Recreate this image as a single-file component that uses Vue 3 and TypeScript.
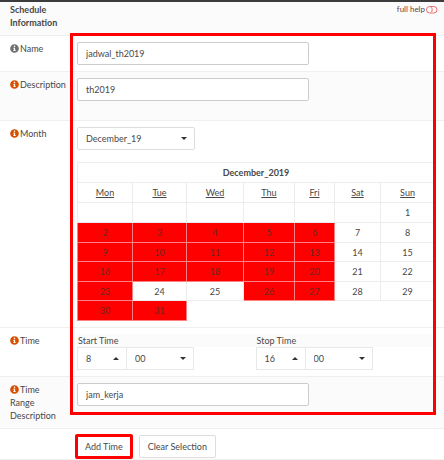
<script setup lang="ts">
import { ref } from 'vue'

interface Day {
  n: number | null
  busy: boolean
}

const name = ref('jadwal_th2019')
const description = ref('th2019')
const month = ref('December_19')
const rangeDescription = ref('jam_kerja')

const weekdays = ['Mon', 'Tue', 'Wed', 'Thu', 'Fri', 'Sat', 'Sun']
const freeDays = [1, 7, 8, 14, 15, 21, 22, 24, 25, 28, 29]

const weeks: Day[][] = Array.from({ length: 6 }, (_, w) =>
  weekdays
    .map((_, d) => w * 7 + d - 5)
    .filter((n) => n <= 31)
    .map((n) => ({ n: n > 0 ? n : null, busy: n > 0 && !freeDays.includes(n) })),
)

const times = [
  { id: 'start', label: 'Start Time', hour: '8', minute: '00' },
  { id: 'stop', label: 'Stop Time', hour: '16', minute: '00' },
]

const infoPath =
  'M256 8C119.043 8 8 119.083 8 256c0 136.997 111.043 248 248 248s248-111.003 248-248C504 119.083 392.957 8 256 8zm0 80c26 0 46 20 46 46s-20 46-46 46-46-20-46-46 20-46 46-46zm64 300c0 7-5 12-12 12h-104c-7 0-12-5-12-12v-32c0-7 5-12 12-12h16v-76h-16c-7 0-12-5-12-12v-32c0-7 5-12 12-12h76c7 0 12 5 12 12v120h16c7 0 12 5 12 12v32z'
</script>

<template>
  <main class="page">
    <header class="head">
      <strong class="title">Schedule Information</strong>
      <a class="help" href="#">
        full help
        <svg class="toggle" viewBox="0 0 12 8" aria-hidden="true">
          <rect x="0.5" y="0.5" width="10.5" height="6.5" rx="3.25" />
          <path d="M5 1.2C6.600 2 6.600 5.500 5 6.300" />
        </svg>
      </a>
    </header>

    <form class="form" @submit.prevent>
      <div class="row">
        <label class="label" for="name">
          <svg class="info muted" viewBox="0 0 512 512" aria-hidden="true"><path :d="infoPath" /></svg>Name
        </label>
        <div class="field"><input id="name" v-model="name" class="control text" type="text" /></div>
      </div>

      <div class="row shaded tall">
        <label class="label" for="description">
          <svg class="info" viewBox="0 0 512 512" aria-hidden="true"><path :d="infoPath" /></svg>Description
        </label>
        <div class="field">
          <input id="description" v-model="description" class="control text" type="text" />
        </div>
      </div>

      <div class="row">
        <label class="label" for="month">
          <svg class="info" viewBox="0 0 512 512" aria-hidden="true"><path :d="infoPath" /></svg>Month
        </label>
        <div class="field">
          <span class="picker month">
            <select id="month" v-model="month" class="control"><option>December_19</option></select>
            <svg class="caret" viewBox="0 0 6 3" aria-hidden="true"><path d="M0 0h6L3 3z" /></svg>
          </span>
          <table class="calendar">
            <colgroup>
              <col v-for="d in weekdays" :key="d" :class="d.toLowerCase()" />
            </colgroup>
            <thead>
              <tr>
                <th colspan="7">December_2019</th>
              </tr>
              <tr>
                <td v-for="d in weekdays" :key="d"><a href="#">{{ d }}</a></td>
              </tr>
            </thead>
            <tbody>
              <tr v-for="(week, i) in weeks" :key="i">
                <td v-for="(day, j) in week" :key="j" :class="{ busy: day.busy }">{{ day.n }}</td>
              </tr>
            </tbody>
          </table>
        </div>
      </div>

      <div class="row">
        <span class="label">
          <svg class="info" viewBox="0 0 512 512" aria-hidden="true"><path :d="infoPath" /></svg>Time
        </span>
        <div class="field times">
          <div v-for="t in times" :key="t.id" class="time">
            <label class="caption" :for="t.id">{{ t.label }}</label>
            <div class="pair">
              <span class="picker hour">
                <select :id="t.id" class="control"><option>{{ t.hour }}</option></select>
                <svg class="caret" viewBox="0 0 6 3" aria-hidden="true"><path d="M0 3h6L3 0z" /></svg>
              </span>
              <span class="picker minute">
                <select class="control" :aria-label="t.label"><option>{{ t.minute }}</option></select>
                <svg class="caret" viewBox="0 0 6 3" aria-hidden="true"><path d="M0 0h6L3 3z" /></svg>
              </span>
            </div>
          </div>
        </div>
      </div>

      <div class="row shaded">
        <label class="label" for="range">
          <svg class="info" viewBox="0 0 512 512" aria-hidden="true"><path :d="infoPath" /></svg>Time<br />Range
          Description
        </label>
        <div class="field"><input id="range" v-model="rangeDescription" class="control text" type="text" /></div>
      </div>
      <div class="frame"></div>
    </form>

    <footer class="actions">
      <span class="marked"><button type="button" class="button">Add Time</button></span>
      <button type="button" class="button">Clear Selection</button>
    </footer>
  </main>
</template>

<style>
body {
  margin: 0;
  background: #fff;
}
</style>

<style scoped>
.page,
.page * {
  box-sizing: border-box;
}
.page {
  font: 9px/13px Lato, 'Noto Sans', sans-serif;
  color: #484848;
  border-top: 2px solid #3c3c3c;
}
.head {
  display: flex;
  justify-content: space-between;
  align-items: flex-start;
  height: 34px;
  padding: 1px 6px 0 10px;
  background: #fbfbfb;
  border-bottom: 1px solid #efefef;
}
.title {
  width: 60px;
}
.help {
  display: flex;
  align-items: center;
  gap: 1px;
  font-size: 8px;
  color: #6a4040;
  text-decoration: none;
}
.toggle {
  width: 12px;
  height: 8px;
  fill: none;
  stroke: #ee6a6a;
}
.form {
  position: relative;
}
.row {
  display: grid;
  grid-template-columns: 57px minmax(0, 1fr);
  column-gap: 10px;
  padding: 6px 10px;
  border-bottom: 1px solid #efefef;
}
.shaded {
  background: #fbfbfb;
}
.tall {
  padding-bottom: 19px;
}
.info {
  width: 9px;
  height: 9px;
  margin-right: 1px;
  vertical-align: -1px;
  fill: #d94f00;
}
.muted {
  fill: #707070;
}
.field {
  display: flex;
  flex-direction: column;
}
.control {
  display: block;
  width: 100%;
  height: 23px;
  margin: 0;
  padding: 0 8px;
  font: inherit;
  color: inherit;
  background: #fff;
  border: 1px solid #ccc;
  border-radius: 2px;
  outline: none;
  appearance: none;
}
.text {
  max-width: 232px;
}
.picker {
  position: relative;
  display: block;
}
.picker .control {
  border-color: #ddd;
}
.month {
  width: 118px;
}
.caret {
  position: absolute;
  top: 10px;
  right: 8px;
  width: 6px;
  height: 3px;
  fill: #333;
  pointer-events: none;
}
.calendar {
  width: 100%;
  margin-top: 12px;
  table-layout: fixed;
  border-collapse: collapse;
  text-align: center;
}
.calendar th,
.calendar td {
  height: 20px;
  padding: 0;
  border: 1px solid #ececec;
}
.calendar tbody tr:nth-child(odd) td {
  height: 19px;
}
.calendar tbody tr:first-child td {
  height: 20px;
}
.calendar a {
  color: inherit;
}
.calendar .busy {
  color: #6e2620;
  background: #f00;
  border-color: #ff8080;
}
.mon {
  width: 55px;
}
.tue {
  width: 54px;
}
.wed {
  width: 57px;
}
.thu {
  width: 51px;
}
.fri {
  width: 40px;
}
.sat {
  width: 46px;
}
.sun {
  width: 54px;
}
.times {
  display: grid;
  grid-template-columns: 1fr 1fr;
}
.caption {
  display: block;
  padding-left: 1px;
  background: #fbfbfb;
}
.pair {
  display: flex;
}
.pair .control {
  border-color: #e8e8e8;
  border-radius: 0;
}
.hour {
  width: 50px;
}
.minute {
  width: 67px;
}
.minute .control {
  border-left-width: 0;
}
.frame {
  position: absolute;
  top: -3px;
  right: 8px;
  bottom: 14px;
  left: 70px;
  border: 3px solid #f00;
  pointer-events: none;
}
.actions {
  display: flex;
  align-items: center;
  gap: 6px;
  height: 31px;
  padding: 5px 10px 0 75px;
  border-bottom: 1px solid #f2f2f2;
}
.marked {
  display: flex;
  border: 3px solid #f00;
  border-radius: 2px;
}
.marked .button {
  height: 19px;
  padding: 0 7px;
  border: 0;
}
.button {
  height: 23px;
  padding: 0 8px;
  font: inherit;
  color: inherit;
  background: #fff;
  border: 1px solid #ddd;
  border-radius: 2px;
}
</style>
